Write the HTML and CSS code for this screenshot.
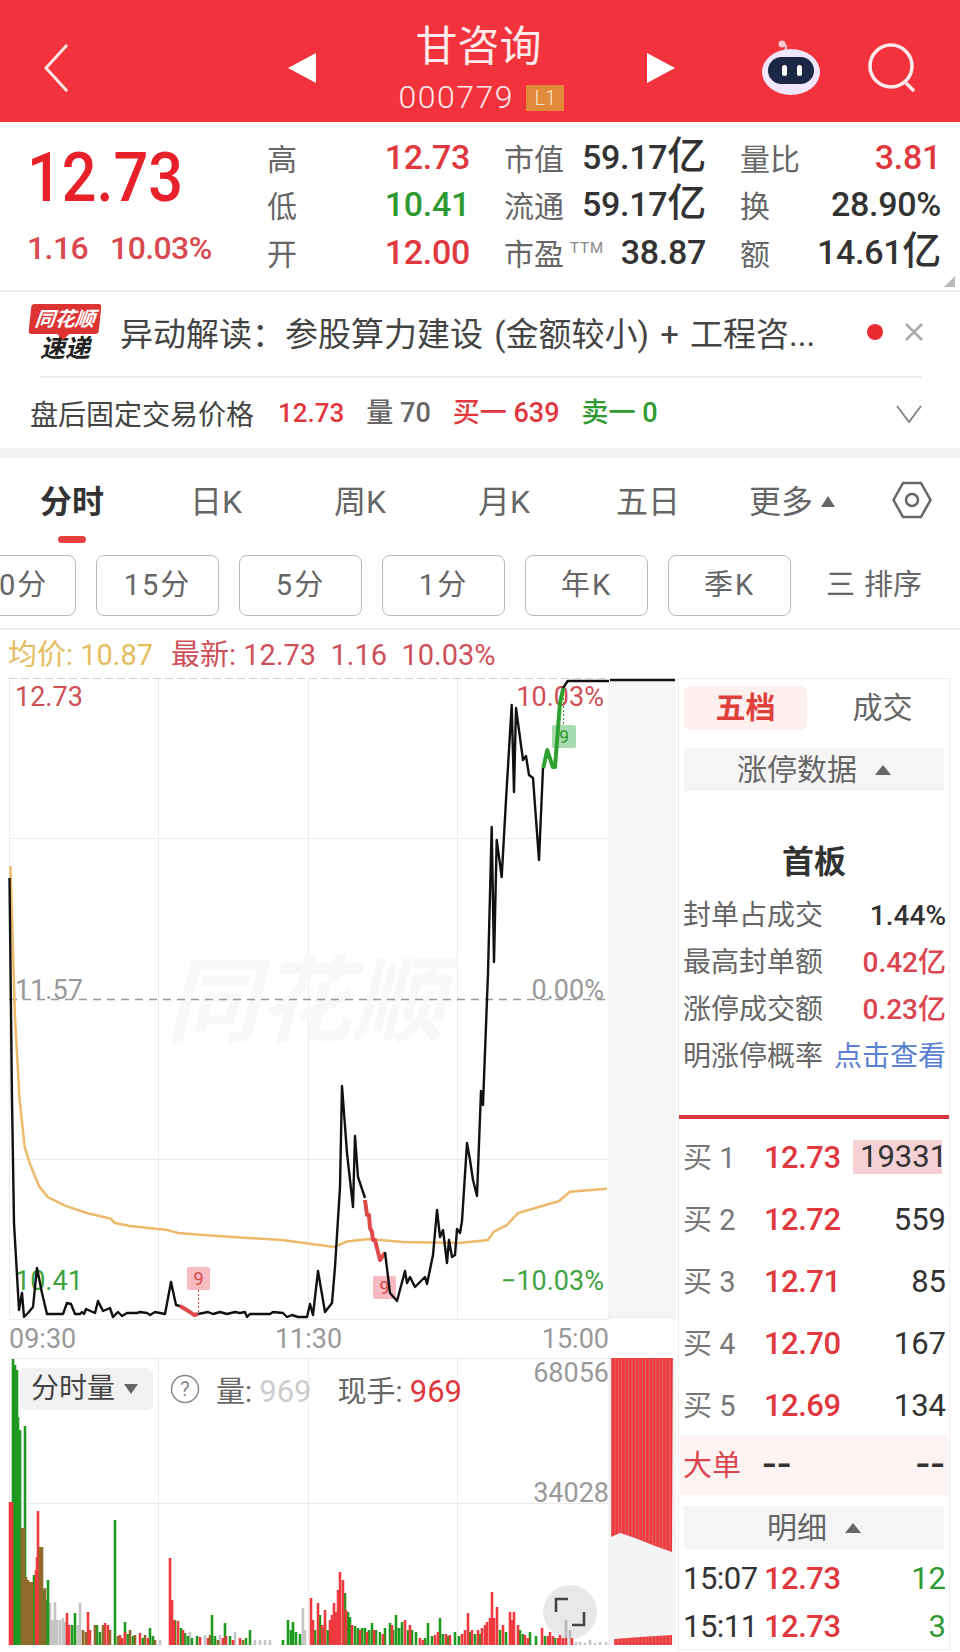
FILE: index.html
```html
<!DOCTYPE html>
<html lang="zh-CN">
<head>
    <meta charset="UTF-8">
    <meta name="viewport" content="width=device-width, initial-scale=1.0">
    <title>甘咨询 000779</title>
    <link rel="stylesheet" href="styles.css">
</head>
<body>
<div class="page">
    <header class="top-bar">
        <svg class="back-icon" width="26" height="48" viewBox="0 0 26 48"><path d="M24 1 3 24l21 23"/></svg>
        <div class="stock-switch">
            <span class="tri tri-left"></span>
            <div class="stock-name">
                <div class="stock-title">甘咨询</div>
                <div class="stock-code">000779 <span class="level">L1</span></div>
            </div>
            <span class="tri tri-right"></span>
        </div>
        <div class="top-icons">
            <svg width="60" height="56" viewBox="0 0 60 56">
                <path d="M24 10C26 7 25 4 22 4" fill="none" stroke="#f8c8d0" stroke-width="2"/>
                <circle cx="21" cy="4" r="3.5" fill="#f8c8d0"/>
                <ellipse cx="30" cy="32" rx="29" ry="23" fill="#efe6fb"/>
                <rect x="7" y="17" width="46" height="27" rx="13.5" fill="#1c2745"/>
                <rect x="21" y="25" width="5" height="11" rx="2.5" fill="#fff"/>
                <rect x="36" y="25" width="5" height="11" rx="2.5" fill="#fff"/>
            </svg>
            <svg width="50" height="50" viewBox="0 0 50 50" class="search-icon">
                <circle cx="23" cy="23" r="21"/>
                <path d="M38 40l8 8"/>
            </svg>
        </div>
    </header>

    <section class="quote">
        <div class="quote-main">
            <div class="last-price">12.73</div>
            <div class="last-change"><span>1.16</span><span>10.03%</span></div>
        </div>
        <div class="quote-grid">
            <div class="cell"><span class="lbl">高</span><span class="val up">12.73</span></div>
            <div class="cell"><span class="lbl">市值</span><span class="val">59.17<span class="unit">亿</span></span></div>
            <div class="cell"><span class="lbl">量比</span><span class="val up">3.81</span></div>
            <div class="cell"><span class="lbl">低</span><span class="val down">10.41</span></div>
            <div class="cell"><span class="lbl">流通</span><span class="val">59.17<span class="unit">亿</span></span></div>
            <div class="cell"><span class="lbl">换</span><span class="val">28.90%</span></div>
            <div class="cell"><span class="lbl">开</span><span class="val up">12.00</span></div>
            <div class="cell"><span class="lbl">市盈<sup class="ttm">TTM</sup></span><span class="val">38.87</span></div>
            <div class="cell"><span class="lbl">额</span><span class="val">14.61<span class="unit">亿</span></span></div>
        </div>
        <span class="corner"></span>
    </section>

    <section class="news">
        <div class="logo">
            <div class="logo-bubble"><span>同花顺</span></div>
            <div class="logo-text">速递</div>
        </div>
        <div class="news-text">异动解读：参股算力建设 (金额较小) + 工程咨...</div>
        <span class="news-dot"></span>
        <svg class="news-close" width="20" height="20" viewBox="0 0 20 20"><path d="M2 2l16 16M18 2 2 18"/></svg>
    </section>

    <section class="after-hours">
        <span class="ah-title">盘后固定交易价格</span>
        <span class="ah-num ah-price up">12.73</span>
        <span class="ah-num gray">量 70</span>
        <span class="ah-num up">买一 639</span>
        <span class="ah-num down">卖一 0</span>
        <svg class="ah-arrow" width="26" height="18" viewBox="0 0 26 18"><path d="M1 1l12 16L25 1"/></svg>
    </section>

    <div class="band"></div>

    <nav class="tabs">
        <div class="tab active">分时</div>
        <div class="tab">日K</div>
        <div class="tab">周K</div>
        <div class="tab">月K</div>
        <div class="tab">五日</div>
        <div class="tab">更多<span class="tab-tri"></span></div>
        <svg class="hex-icon" width="40" height="38" viewBox="0 0 40 38">
            <path d="M1.5 19 11 2h18l9.5 17L29 36H11z"/>
            <circle cx="20" cy="19" r="6"/>
        </svg>
    </nav>

    <div class="periods">
        <div class="period">30分</div>
        <div class="period">15分</div>
        <div class="period">5分</div>
        <div class="period">1分</div>
        <div class="period">年K</div>
        <div class="period">季K</div>
        <div class="sort"><span class="sort-mark">三</span>排序</div>
    </div>

    <div class="legend">
        <span class="avg">均价: 10.87</span>
        <span class="latest">最新: 12.73&nbsp; 1.16&nbsp; 10.03%</span>
    </div>

    <main class="board">
        <svg class="chart" width="678" height="980" viewBox="0 672 678 980">
            <defs>
                <pattern id="stripes" width="3.4" height="10" patternUnits="userSpaceOnUse">
                    <rect width="2.8" height="10" fill="#f03a3e"/>
                    <rect x="2.8" width=".6" height="10" fill="#cf4a4e"/>
                </pattern>
            </defs>

            <!-- price panel -->
            <rect x="609" y="679" width="67" height="640" fill="#f5f5f5"/>
            <path class="grid" d="M9.5 679V1319M158.5 679V1319M308.5 679V1319M457.5 679V1319M609 679V1319M9 838.5H609M9 1159.5H609M9 1319.5H609"/>
            <path class="grid-top" d="M9 678.5H609"/>
            <text class="mark" x="166" y="1034">同花顺</text>
            <path class="grid-mid" d="M9 999.5H609"/>

            <text class="axis red" x="15" y="706">12.73</text>
            <text class="axis red" x="604" y="706" text-anchor="end">10.03%</text>
            <text class="axis gray" x="15" y="999">11.57</text>
            <text class="axis gray" x="604" y="999" text-anchor="end">0.00%</text>
            <text class="axis green" x="15" y="1290">10.41</text>
            <text class="axis green" x="604" y="1290" text-anchor="end">−10.03%</text>

            <polyline class="avg-line" points="10.4,866 15,1017 19.5,1099 24.7,1147 30,1164 39,1186 47.7,1197 65,1205.6 86.7,1213 110.6,1218.6 115,1223 130,1226 167,1230 178,1233 217,1236 282,1240 334,1247 347,1241.5 369,1239 403,1242 460,1243 488,1240 494,1231.6 507,1225 518,1213 559,1201 570,1191.7 607,1188.7"/>

            <rect class="tag-red" x="187" y="1267" width="23" height="23" rx="2"/>
            <path class="tag-stem-red" d="M198.5 1290V1312"/>
            <text class="tag-num red" x="198.5" y="1285" text-anchor="middle">9</text>
            <rect class="tag-red" x="373" y="1276" width="23" height="23" rx="2"/>
            <text class="tag-num red" x="384.5" y="1294" text-anchor="middle">9</text>
            <rect class="tag-green" x="552" y="725" width="24" height="23" rx="2"/>
            <path class="tag-stem-green" d="M563.5 690V725"/>
            <text class="tag-num green" x="564" y="743" text-anchor="middle">9</text>

            <polyline class="price-line" points="9.5,878 12,1100 14,1223 19,1310 22,1293 24,1317 28,1313 33,1307 37,1268 42,1293 47,1314 63,1314 67,1303 71,1304 75,1314 80,1314 82,1312 84,1314 86,1309 95,1313 98,1301 103,1311 110,1308 113,1317 118,1312 122,1316 127,1313 137,1313 140,1312 147,1313 150,1315 155,1312 165,1314 171,1282 176,1305 180,1306"/>
            <polyline class="thick-red" points="180,1306 190,1312 194,1315 198,1314"/>
            <polyline class="price-line" points="198,1314 208,1312 213,1314 220,1312 227,1314 235,1312 240,1313 245,1312 247,1317 250,1314 270,1314 273,1312 283,1313 287,1317 292,1315 298,1317 307,1317 310,1304 313,1315 318,1271 325,1312 332,1303 335,1267 340,1187 342,1086 347,1153 353,1207 355,1136 358,1177 365,1198"/>
            <polyline class="thick-red" points="365,1200 367,1215 369,1215 370,1228 372,1232 373,1240 375,1240 380,1260 385,1253"/>
            <polyline class="price-line" points="385,1252 390,1293 397,1301 405,1271 407,1283 410,1277 415,1287 425,1277 427,1284 433,1255 437,1210 440,1237 443,1230 447,1263 449,1240 452,1257 455,1255 457,1229 460,1233 462,1221 467,1143 470,1160 473,1180 477,1196 481,1091 483,1105 488,973 491.7,827 494,962 496.7,840 501.7,877 506,800 511.7,705 514,792 516,708 523,760 526,756 529,775 533,778 539,860 543,768"/>
            <polyline class="thick-green" points="543.3,768 547.3,750 552.7,767 555,767 560,703 563.3,688"/>
            <polyline class="price-line" points="563,688 567.7,681 609,681"/>
            <path class="price-line" d="M610 680H675"/>

            <text class="axis gray" x="9" y="1348">09:30</text>
            <text class="axis gray" x="308.5" y="1348" text-anchor="middle">11:30</text>
            <text class="axis gray" x="609" y="1348" text-anchor="end">15:00</text>

            <!-- volume panel -->
            <rect x="609" y="1358" width="67" height="287" fill="#f4f4f4"/>
            <path class="grid" d="M9.5 1358V1646M158.5 1358V1646M308.5 1358V1646M457.5 1358V1646M609 1358V1646M9 1358.5H609M9 1503.5H609"/>
            <path class="bars gray-bars" d="M50 1645V1603M52 1645V1620M54 1645V1622M55 1645V1602M57 1645V1620M60 1645V1620M63 1645V1618M65 1645V1622M80 1645V1603M78 1645V1625M160 1645V1640M190 1645V1632M205 1645V1635M220 1645V1635M235 1645V1632M255 1645V1640M260 1645V1640M265 1645V1640M270 1645V1640M303 1645V1608M305 1645V1630M566 1645V1620M570 1645V1630M576 1645V1642M580 1645V1642M585 1645V1643M590 1645V1640M595 1645V1643M600 1645V1642M606 1645V1642"/>
            <path class="bars green-bars" d="M13 1645V1359M15 1645V1365M17 1645V1370M18 1645V1417M20 1645V1430M25 1645V1426M34 1645V1575M43 1645V1590M48 1645V1580M46 1645V1600M44 1645V1610M115 1645V1520M75 1645V1613M72 1645V1625M97 1645V1625M100 1645V1632M125 1645V1622M128 1645V1634M133 1645V1636M143 1645V1638M150 1645V1628M153 1645V1636M175 1645V1620M181 1645V1628M185 1645V1633M188 1645V1636M192 1645V1638M197 1645V1636M212 1645V1615M215 1645V1636M225 1645V1623M230 1645V1636M246 1645V1638M250 1645V1630M283 1645V1640M288 1645V1620M291 1645V1630M293 1645V1622M296 1645V1632M300 1645V1634M315 1645V1630M320 1645V1615M323 1645V1628M325 1645V1622M328 1645V1630M345 1645V1593M348 1645V1612M350 1645V1617M355 1645V1626M358 1645V1628M362 1645V1628M365 1645V1628M369 1645V1630M372 1645V1623M376 1645V1630M380 1645V1632M385 1645V1628M390 1645V1623M393 1645V1630M396 1645V1615M399 1645V1628M402 1645V1622M408 1645V1630M412 1645V1630M416 1645V1632M425 1645V1638M428 1645V1623M432 1645V1636M440 1645V1618M443 1645V1634M448 1645V1636M455 1645V1632M459 1645V1636M470 1645V1632M475 1645V1634M480 1645V1634M500 1645V1630M506 1645V1632M520 1645V1630M523 1645V1634M530 1645V1632M536 1645V1636M545 1645V1636M555 1645V1638"/>
            <path class="bars red-bars" d="M10 1645V1502M12 1645V1502M38 1645V1511M37 1645V1557M36 1645V1570M67 1645V1613M69 1645V1625M88 1645V1612M90 1645V1630M105 1645V1623M108 1645V1625M120 1645V1635M122 1645V1638M125 1645V1632M140 1645V1633M148 1645V1638M170 1645V1558M172 1645V1600M174 1645V1620M178 1645V1621M183 1645V1630M200 1645V1637M208 1645V1638M223 1645V1638M226 1645V1636M233 1645V1640M240 1645V1638M311 1645V1598M313 1645V1620M318 1645V1603M322 1645V1625M325 1645V1610M330 1645V1620M332 1645V1615M334 1645V1603M336 1645V1612M338 1645V1590M340 1645V1572M343 1645V1580M346 1645V1610M352 1645V1625M360 1645V1630M367 1645V1632M374 1645V1630M383 1645V1634M392 1645V1625M405 1645V1620M410 1645V1625M420 1645V1638M423 1645V1640M435 1645V1635M438 1645V1632M446 1645V1634M450 1645V1635M462 1645V1634M465 1645V1630M468 1645V1613M472 1645V1630M478 1645V1630M482 1645V1628M485 1645V1625M487 1645V1622M490 1645V1618M492 1645V1592M494 1645V1618M497 1645V1607M503 1645V1625M510 1645V1612M512 1645V1620M514 1645V1612M518 1645V1625M525 1645V1635M528 1645V1638M542 1645V1628M548 1645V1636M550 1645V1632M553 1645V1636M558 1645V1638M560 1645V1635M563 1645V1638M566 1645V1638M572 1645V1638"/>
            <path class="bars brown-bars" d="M22 1645V1528M24 1645V1528M26 1645V1577M28 1645V1580M30 1645V1582M32 1645V1582M40 1645V1547M42 1645V1547M45 1645V1588M83 1645V1630M86 1645V1632M95 1645V1625M103 1645V1625M110 1645V1630M118 1645V1636M130 1645V1630M135 1645V1635M145 1645V1635M155 1645V1640M210 1645V1635M218 1645V1640M243 1645V1640"/>
            <polygon points="611,1358 673,1358 672,1552 655,1546 635,1538 620,1533 611,1537" fill="url(#stripes)"/>
            <polygon points="614,1639 640,1637 672,1635 672,1645 614,1645" fill="url(#stripes)"/>

            <text class="axis gray" x="609" y="1382" text-anchor="end">68056</text>
            <text class="axis gray" x="609" y="1502" text-anchor="end">34028</text>

            <circle cx="570" cy="1612" r="27" fill="#8a8a8a" fill-opacity=".2"/>
            <path class="expand" d="M556 1612v-13h12M584 1612v13h-12"/>
        </svg>

        <div class="vol-tools">
            <div class="vol-select">分时量<span class="vol-tri"></span></div>
            <svg class="vol-help" width="30" height="30" viewBox="0 0 30 30">
                <circle cx="15" cy="15" r="13.5"/>
                <text x="15" y="22" text-anchor="middle">?</text>
            </svg>
            <span class="vol-item">量: <em class="pale">969</em></span>
            <span class="vol-item now">现手: <em class="up">969</em></span>
        </div>

        <aside class="side">
            <div class="side-tabs">
                <div class="side-tab active">五档</div>
                <div class="side-tab">成交</div>
            </div>
            <div class="fold-bar">涨停数据<span class="fold-tri"></span></div>
            <div class="limit-title">首板</div>
            <div class="limit-row"><span>封单占成交</span><b>1.44%</b></div>
            <div class="limit-row"><span>最高封单额</span><b class="up">0.42亿</b></div>
            <div class="limit-row"><span>涨停成交额</span><b class="up">0.23亿</b></div>
            <div class="limit-row"><span>明涨停概率</span><span class="link">点击查看</span></div>
            <div class="red-rule"></div>
            <div class="book">
                <div class="book-row"><span class="book-lbl">买 1</span><span class="book-price up">12.73</span><span class="book-vol hot">19331</span></div>
                <div class="book-row"><span class="book-lbl">买 2</span><span class="book-price up">12.72</span><span class="book-vol">559</span></div>
                <div class="book-row"><span class="book-lbl">买 3</span><span class="book-price up">12.71</span><span class="book-vol">85</span></div>
                <div class="book-row"><span class="book-lbl">买 4</span><span class="book-price up">12.70</span><span class="book-vol">167</span></div>
                <div class="book-row"><span class="book-lbl">买 5</span><span class="book-price up">12.69</span><span class="book-vol">134</span></div>
            </div>
            <div class="big-order"><span class="big-lbl">大单</span><span class="big-val">--</span><span class="big-val end">--</span></div>
            <div class="fold-bar detail">明细<span class="fold-tri"></span></div>
            <div class="trades">
                <div class="trade-row"><span class="trade-time">15:07</span><span class="book-price up">12.73</span><span class="book-vol down">12</span></div>
                <div class="trade-row"><span class="trade-time">15:11</span><span class="book-price up">12.73</span><span class="book-vol down">3</span></div>
            </div>
        </aside>
    </main>
</div>
</body>
</html>
```

FILE: styles.css
```css
* {
    box-sizing: border-box;
}
body {
    margin: 0;
    background: #ffffff;
    font-family: Roboto, "Noto Sans CJK SC", sans-serif;
    color: #333;
}
.page {
    width: 960px;
    height: 1652px;
    overflow: hidden;
}
.up { color: #e0383e; }
.down { color: #2f9a32; }
.gray { color: #666; }

/* top bar */
.top-bar {
    height: 122px;
    background: #f2323c;
    display: flex;
    align-items: center;
    padding: 14px 42px 0 43px;
    color: #fdeaea;
}
.back-icon path {
    fill: none;
    stroke: #fde4e4;
    stroke-width: 3;
}
.stock-switch {
    display: flex;
    align-items: center;
    gap: 56px;
    margin-left: 219px;
}
.tri {
    width: 0;
    height: 0;
    border-top: 15px solid transparent;
    border-bottom: 15px solid transparent;
}
.tri-left { border-right: 28px solid #fff; }
.tri-right { border-left: 28px solid #fff; }
.stock-name {
    width: 221px;
    text-align: center;
    margin: 0 -1px;
}
.stock-title {
    font-size: 42px;
    line-height: 56px;
    padding-right: 6px;
}
.stock-code {
    font-size: 32px;
    line-height: 36px;
    margin-top: 4px;
    margin-bottom: 2px;
    font-weight: 300;
    letter-spacing: 1.5px;
    white-space: nowrap;
}
.level {
    display: inline-block;
    width: 38px;
    height: 26px;
    line-height: 26px;
    margin-left: 3px;
    font-size: 20px;
    letter-spacing: 0;
    background: #e08a3c;
    color: #fbe3c8;
    vertical-align: 3px;
}
.top-icons {
    margin-left: auto;
    display: flex;
    align-items: center;
    gap: 47px;
}
.search-icon {
    fill: none;
    stroke: #fdeaea;
    stroke-width: 3.5;
}

/* quote */
.quote {
    position: relative;
    height: 170px;
    border-bottom: 2px solid #eee;
    display: flex;
    padding-top: 11px;
}
.quote-main {
    width: 267px;
    padding-left: 27px;
}
.last-price {
    font-size: 68px;
    font-weight: 500;
    line-height: 72px;
    color: #e8202a;
    margin-top: 9px;
    transform: scaleX(.9);
    transform-origin: left center;
}
.last-change {
    display: flex;
    gap: 22px;
    margin-top: 15px;
    font-size: 32px;
    font-weight: 500;
    letter-spacing: -.6px;
    line-height: 38px;
    color: #d94a50;
}
.quote-grid {
    display: grid;
    grid-template-columns: 203px 202px 201px;
    grid-auto-rows: 47.5px;
    column-gap: 34px;
    align-items: center;
}
.cell {
    display: flex;
    justify-content: space-between;
    align-items: center;
    white-space: nowrap;
}
.lbl {
    font-size: 30px;
    color: #666;
}
.ttm {
    font-size: 15px;
    letter-spacing: 1px;
    vertical-align: 12px;
    line-height: 0;
    margin-left: 6px;
    color: #888;
}
.val {
    font-size: 34px;
    font-weight: 500;
    letter-spacing: -.3px;
    line-height: 44px;
}
.unit {
    font-size: 39px;
    line-height: 0;
}
.corner {
    position: absolute;
    right: 5px;
    bottom: 3px;
    width: 0;
    height: 0;
    border-left: 11px solid transparent;
    border-bottom: 11px solid #bbb;
}

/* news */
.news {
    height: 86px;
    margin: 0 38px 0 0;
    padding: 0 0 4px 30px;
    display: flex;
    align-items: center;
    position: relative;
    border-bottom: 2px solid #eee;
}
.news::after {
    content: "";
    position: absolute;
    left: 0;
    bottom: -2px;
    width: 40px;
    height: 2px;
    background: #fff;
}
.logo {
    width: 70px;
    flex: none;
    margin-top: 4px;
}
.logo-bubble {
    position: relative;
    height: 30px;
    background: #dd3433;
    border-radius: 3px;
    transform: skewX(-6deg);
    color: #fff;
    font-size: 20px;
    font-weight: 700;
    font-style: italic;
    line-height: 30px;
    text-align: center;
}
.logo-bubble::after {
    content: "";
    position: absolute;
    left: 29px;
    bottom: -6px;
    border-left: 6px solid transparent;
    border-right: 6px solid transparent;
    border-top: 6px solid #dd3433;
}
.logo-text {
    font-size: 25px;
    line-height: 30px;
    font-weight: 700;
    font-style: italic;
    color: #222;
    text-align: center;
}
.news-text {
    margin-left: 20px;
    font-size: 33px;
    word-spacing: 3px;
    color: #444;
    white-space: nowrap;
    width: 700px;
    flex: none;
    overflow: hidden;
}
.news-dot {
    width: 16px;
    height: 16px;
    border-radius: 50%;
    background: #ea2c32;
    margin-left: 47px;
    flex: none;
}
.news-close {
    margin-left: 21px;
    flex: none;
}
.news-close path {
    stroke: #aaa;
    stroke-width: 2.5;
    fill: none;
}

/* after hours */
.after-hours {
    height: 70px;
    display: flex;
    align-items: center;
    padding: 0 38px 0 30px;
}
.ah-title {
    font-size: 28px;
    color: #444;
    margin-right: 24px;
}
.ah-num {
    margin-right: 22px;
    font-weight: 500;
    font-size: 27px;
    line-height: 38px;
}
.ah-price {
    font-size: 26px;
}
.ah-arrow {
    margin-left: auto;
    margin-top: 2px;
}
.ah-arrow path {
    fill: none;
    stroke: #888;
    stroke-width: 2;
}
.band {
    height: 10px;
    background: #f3f3f3;
}

/* tabs */
.tabs {
    height: 97px;
    display: flex;
    align-items: flex-start;
    padding-top: 22px;
    position: relative;
}
.tab {
    width: 144px;
    text-align: center;
    font-size: 32px;
    line-height: 44px;
    color: #666;
}
.tab.active {
    font-weight: 700;
    color: #333;
    position: relative;
}
.tab.active::after {
    content: "";
    position: absolute;
    left: 58px;
    top: 56px;
    width: 28px;
    height: 7px;
    border-radius: 4px;
    background: #e8403f;
}
.tab-tri {
    display: inline-block;
    margin-left: 8px;
    border-left: 7px solid transparent;
    border-right: 7px solid transparent;
    border-bottom: 11px solid #666;
    vertical-align: 6px;
}
.hex-icon {
    margin: 1px 28px 0 auto;
}
.hex-icon path,
.hex-icon circle {
    fill: none;
    stroke: #666;
    stroke-width: 2.5;
}

/* period buttons */
.periods {
    height: 75px;
    display: flex;
    gap: 20px;
    margin-left: -47px;
    align-items: flex-start;
    border-bottom: 2px solid #eee;
}
.period {
    width: 123px;
    height: 61px;
    flex: none;
    border: 1.5px solid #bbb;
    border-radius: 8px;
    text-align: center;
    line-height: 58px;
    font-size: 29px;
    letter-spacing: 2px;
    color: #666;
}
.sort {
    margin-left: 15px;
    font-size: 29px;
    line-height: 61px;
    color: #666;
    white-space: nowrap;
}
.sort-mark {
    margin-right: 9px;
}

/* legend */
.legend {
    height: 42px;
    padding: 9px 0 0 8px;
    display: flex;
    gap: 18px;
    font-size: 29px;
    line-height: 32px;
    white-space: nowrap;
}
.avg { color: #e6bd5e; }
.latest { color: #d0505a; }

/* chart */
.board {
    position: relative;
    display: flex;
    align-items: flex-start;
}
.chart {
    display: block;
    flex: none;
}
.grid {
    stroke: #ececec;
    stroke-width: 1;
    fill: none;
}
.grid-top {
    stroke: #cfcfcf;
    stroke-width: 1;
    stroke-dasharray: 8 4;
}
.grid-mid {
    stroke: #999;
    stroke-width: 1.5;
    stroke-dasharray: 8 6;
}
.mark {
    font-size: 93px;
    font-weight: 700;
    font-style: italic;
    fill: #f8f8f8;
}
.axis {
    font-size: 27px;
}
.axis.red { fill: #cf4f55; }
.axis.gray { fill: #999; }
.axis.green { fill: #3fa33f; }
.avg-line {
    fill: none;
    stroke: #edb96b;
    stroke-width: 2.5;
}
.price-line {
    fill: none;
    stroke: #111;
    stroke-width: 2.4;
    stroke-linejoin: round;
}
.thick-red {
    fill: none;
    stroke: #e0484c;
    stroke-width: 4;
    stroke-linejoin: round;
}
.thick-green {
    fill: none;
    stroke: #2fa032;
    stroke-width: 4;
    stroke-linejoin: round;
}
.tag-red { fill: #f6bcc2; }
.tag-green { fill: #a8dcae; }
.tag-stem-red {
    stroke: #e0484c;
    stroke-dasharray: 2 2;
}
.tag-stem-green {
    stroke: #2fa032;
    stroke-dasharray: 2 2;
}
.tag-num {
    font-size: 18px;
}
.tag-num.red { fill: #d8484c; }
.tag-num.green { fill: #2f9a32; }
.bars {
    fill: none;
    stroke-width: 2.6;
}
.gray-bars { stroke: #c4c4c4; }
.green-bars { stroke: #1f9a1f; }
.red-bars { stroke: #ee3a3e; }
.brown-bars { stroke: #8f6a2a; }
.expand {
    fill: none;
    stroke: #444;
    stroke-width: 2.6;
}

/* volume toolbar, lies over the chart */
.vol-tools {
    position: absolute;
    left: 20px;
    top: 696px;
    display: flex;
    align-items: center;
    font-size: 29px;
    color: #666;
}
.vol-select {
    width: 133px;
    height: 42px;
    padding-left: 11px;
    background: #f2f2f2;
    border-radius: 6px;
    line-height: 42px;
    font-size: 28px;
    color: #444;
}
.vol-tri {
    display: inline-block;
    margin-left: 9px;
    border-left: 7px solid transparent;
    border-right: 7px solid transparent;
    border-top: 10px solid #666;
    vertical-align: 4px;
}
.vol-help {
    margin-left: 17px;
}
.vol-help circle {
    fill: none;
    stroke: #888;
    stroke-width: 1.5;
}
.vol-help text {
    font-size: 20px;
    fill: #888;
}
.vol-item {
    margin-left: 16px;
    white-space: nowrap;
}
.vol-item.now {
    margin-left: 26px;
}
.vol-item em {
    font-style: normal;
    font-size: 31px;
}
.pale { color: #ccc; }

/* side panel */
.side {
    width: 272px;
    height: 972px;
    margin-top: 6px;
    border: 1px solid #eee;
    padding: 7px 5px 0;
    flex: none;
}
.side-tabs {
    display: flex;
    height: 44px;
    align-items: center;
}
.side-tab {
    width: 123px;
    height: 44px;
    line-height: 44px;
    text-align: center;
    font-size: 30px;
    color: #666;
    border-radius: 6px;
}
.side-tab + .side-tab {
    margin-left: 14px;
}
.side-tab.active {
    background: #fdf0ef;
    color: #e0403c;
    font-weight: 700;
}
.fold-bar {
    margin-top: 18px;
    height: 43px;
    line-height: 43px;
    background: #f5f5f5;
    text-align: center;
    font-size: 30px;
    color: #666;
}
.fold-tri {
    display: inline-block;
    margin-left: 18px;
    border-left: 8px solid transparent;
    border-right: 8px solid transparent;
    border-bottom: 10px solid #666;
    vertical-align: 5px;
}
.limit-title {
    margin-top: 46px;
    height: 50px;
    line-height: 50px;
    text-align: center;
    font-size: 32px;
    font-weight: 700;
}
.limit-row {
    height: 47px;
    line-height: 47px;
    display: flex;
    justify-content: space-between;
    font-size: 28px;
    color: #666;
    margin: 0 -2px 0 -1px;
}
.limit-title + .limit-row {
    margin-top: 5px;
}
.limit-row b {
    font-weight: 500;
    color: #333;
}
.limit-row b.up { color: #dc4450; }
.link { color: #5a80d0; }
.red-rule {
    height: 4px;
    margin: 35px -5px 0;
    background: #d8383c;
}
.book {
    margin-top: 7px;
}
.book-row,
.trade-row {
    display: grid;
    grid-template-columns: 81px 75px 1fr;
    align-items: center;
    white-space: nowrap;
    margin-left: -1px;
}
.book-row { height: 62px; }
.trade-row { height: 48px; }
.trades {
    margin-top: 5px;
}
.book-lbl {
    font-size: 29px;
    color: #777;
    margin-top: -5px;
}
.book-price {
    font-size: 31px;
    font-weight: 500;
    letter-spacing: -.5px;
}
.book-vol {
    justify-self: end;
    font-size: 31px;
    color: #333;
    margin-right: -2px;
}
.book-vol.hot {
    background: #f5d0d4;
    width: 89px;
    height: 34px;
    line-height: 34px;
    margin-right: 2px;
    padding-left: 7px;
}
.book-vol.down { color: #2f9a32; }
.big-order {
    height: 60px;
    margin: -1px -4px 0;
    padding: 0 4px 4px 3px;
    background: #fdf3f2;
    display: grid;
    grid-template-columns: 80px 75px 1fr;
    align-items: center;
}
.big-lbl {
    font-size: 29px;
    color: #dc4450;
}
.big-val {
    font-size: 46px;
    line-height: 1;
    letter-spacing: 2px;
    color: #333;
}
.big-val.end {
    justify-self: end;
    margin-right: -2px;
}
.fold-bar.detail {
    margin-top: 11px;
}
.trade-time {
    font-size: 31px;
    color: #333;
    letter-spacing: -.5px;
}
```
